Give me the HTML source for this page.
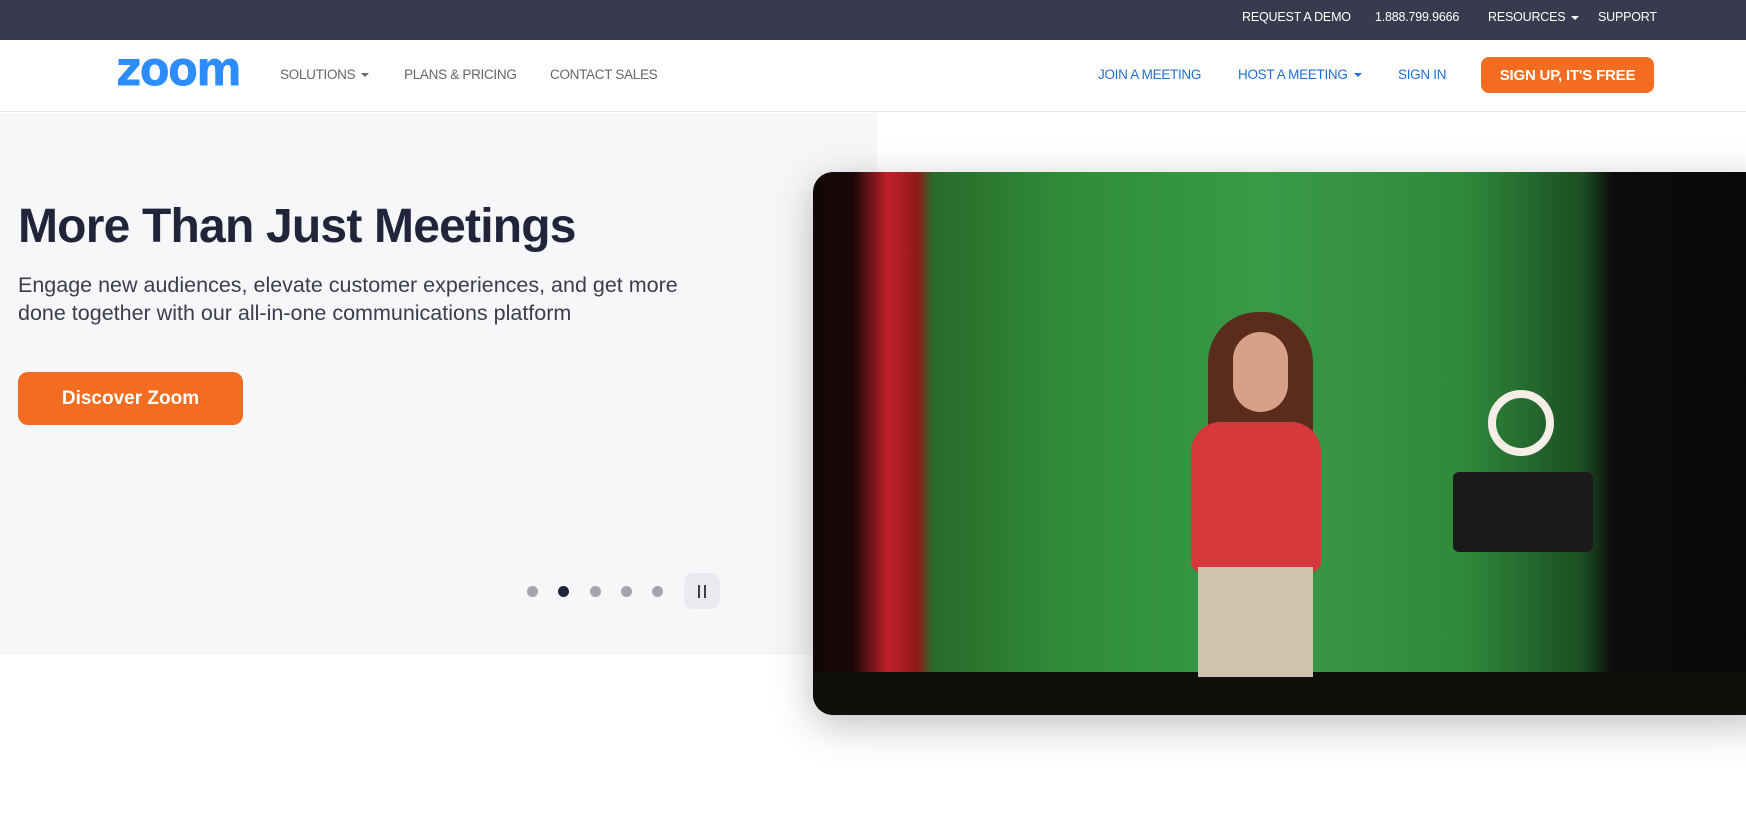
<!DOCTYPE html>
<html><head><meta charset="utf-8"><style>
*{margin:0;padding:0;box-sizing:border-box}
body{width:1746px;height:834px;overflow:hidden;background:#fff;font-family:"Liberation Sans",sans-serif;position:relative}
.top{position:absolute;left:0;top:0;width:1746px;height:40px;background:#393a4e}
.top span{position:absolute;top:10px;color:#fff;font-size:12.5px;letter-spacing:-0.2px}
.nav{position:absolute;left:0;top:40px;width:1746px;height:72px;background:#fff;border-bottom:1px solid #e6e7ea}
.nav span{position:absolute;top:27px;font-size:13.5px;letter-spacing:-0.3px}
.g{color:#666}.b{color:#1f6fd8}
.tri{display:inline-block;width:0;height:0;border-left:4px solid transparent;border-right:4px solid transparent;border-top:4px solid currentColor;vertical-align:middle;margin-left:6px}
.logo{position:absolute;left:116px;top:4px;font-size:44px;font-weight:bold;color:#2d8cff;letter-spacing:-2px;font-family:"DejaVu Sans",sans-serif;transform:scaleY(1.1)}
.btn{position:absolute;left:1481px;top:57px;width:173px;height:36px;background:#f26d21;border-radius:8px;color:#fff;font-size:15px;font-weight:bold;text-align:center;line-height:37px;letter-spacing:-0.2px}
.hero{position:absolute;left:0;top:113px;width:877px;height:542px;background:#f6f7f9}
h1{position:absolute;left:18px;top:199px;font-size:48px;font-weight:bold;color:#23243a;letter-spacing:-0.8px;white-space:nowrap}
.sub{position:absolute;left:18px;top:271px;font-size:21.5px;line-height:28px;color:#3c3d4c}
.dz{position:absolute;left:18px;top:372px;width:225px;height:53px;background:#f26d21;border-radius:10px;color:#fff;font-size:19px;font-weight:bold;text-align:center;line-height:53px}
.dot{position:absolute;top:586px;width:11px;height:11px;border-radius:50%;background:#a4a5ab}
.pause{position:absolute;left:684px;top:573px;width:36px;height:36px;border-radius:9px;background:#e9eaee}
.pause i{position:absolute;top:12px;width:2px;height:13px;background:#3a3b4d}
.vid{position:absolute;left:813px;top:172px;width:960px;height:543px;border-radius:20px;overflow:hidden;box-shadow:0 10px 40px rgba(0,0,0,.25);
background:linear-gradient(90deg,#120606 0,#1a0808 40px,#c2202a 75px,#8e1a1a 105px,#2a6a2a 120px,#2e8c3a 250px,#3a9a48 450px,#2f8a3c 650px,#1c4e22 770px,#0c0c0c 800px,#080808 100%)}
</style></head><body>
<div class="top">
<span style="left:1242px">REQUEST A DEMO</span>
<span style="left:1375px">1.888.799.9666</span>
<span style="left:1488px">RESOURCES<i class="tri" style="color:#fff"></i></span>
<span style="left:1598px">SUPPORT</span>
</div>
<div class="nav">
<div class="logo">zoom</div>
<span class="g" style="left:280px">SOLUTIONS<i class="tri"></i></span>
<span class="g" style="left:404px">PLANS &amp; PRICING</span>
<span class="g" style="left:550px">CONTACT SALES</span>
<span class="b" style="left:1098px">JOIN A MEETING</span>
<span class="b" style="left:1238px">HOST A MEETING<i class="tri"></i></span>
<span class="b" style="left:1398px">SIGN IN</span>
</div>
<div class="btn">SIGN UP, IT'S FREE</div>
<div class="hero"></div>
<h1>More Than Just Meetings</h1>
<div class="sub">Engage new audiences, elevate customer experiences, and get more<br>done together with our all-in-one communications platform</div>
<div class="dz">Discover Zoom</div>
<div class="dot" style="left:527px"></div>
<div class="dot" style="left:558px;background:#23243a"></div>
<div class="dot" style="left:590px"></div>
<div class="dot" style="left:621px"></div>
<div class="dot" style="left:652px"></div>
<div class="pause"><i style="left:14px"></i><i style="left:20px"></i></div>
<div class="vid">
<div style="position:absolute;left:0;top:500px;width:960px;height:45px;background:#0f0f0c"></div>
<div style="position:absolute;left:395px;top:140px;width:105px;height:170px;border-radius:50px 50px 30px 30px;background:#5a2c1c"></div>
<div style="position:absolute;left:420px;top:160px;width:55px;height:80px;border-radius:28px;background:#d9a089"></div>
<div style="position:absolute;left:378px;top:250px;width:130px;height:150px;border-radius:30px 30px 10px 10px;background:#d6383c"></div>
<div style="position:absolute;left:385px;top:395px;width:115px;height:110px;background:#cfc3ad"></div>
<div style="position:absolute;left:675px;top:218px;width:66px;height:66px;border-radius:50%;border:8px solid #f4eee6"></div>
<div style="position:absolute;left:640px;top:300px;width:140px;height:80px;background:#1a1a1a;border-radius:6px"></div>
</div>
</body></html>
